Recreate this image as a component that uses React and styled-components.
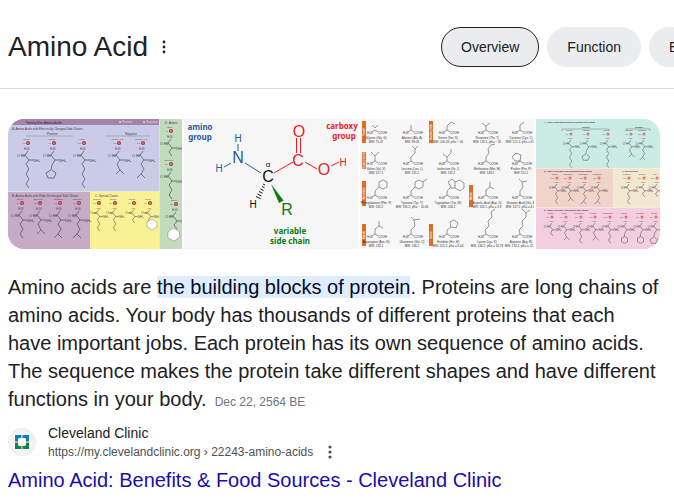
import React from "react";
import styled, { createGlobalStyle } from "styled-components";

const GlobalStyle = createGlobalStyle`
  * { box-sizing: border-box; }
  body {
    margin: 0;
    background: #fff;
    color: #202124;
    font-family: "Liberation Sans", Arial, sans-serif;
    overflow-x: hidden;
  }
`;

const Header = styled.header`
  display: flex;
  align-items: center;
  padding: 27px 0 21px 8px;
  border-bottom: 1px solid #dadce0;
  overflow: hidden;
`;

const TitleBlock = styled.div`
  display: flex;
  align-items: center;
  gap: 8px;
  flex: 0 0 433px;
`;

const Title = styled.h1`
  margin: 0;
  font-size: 28px;
  line-height: 36px;
  font-weight: 400;
`;

const MenuButton = styled.button`
  display: flex;
  align-items: center;
  justify-content: center;
  width: 16px;
  height: 18px;
  padding: 0;
  border: 0;
  background: none;
  color: ${(p) => p.$tone};
  cursor: pointer;
`;

const Chips = styled.nav`
  display: flex;
  gap: 8px;
`;

const Chip = styled.button`
  flex: none;
  height: 40px;
  padding: 0 19px;
  border: 1px solid ${(p) => (p.$active ? "#202124" : "#ebecee")};
  border-radius: 20px;
  background: #ebecee;
  color: #202124;
  font: 14px/20px "Liberation Sans", Arial, sans-serif;
  cursor: pointer;
`;

const Main = styled.main`
  padding: 30px 14px 8px 8px;
`;

const Gallery = styled.div`
  display: grid;
  grid-template-columns: 174fr 174fr 174fr 124fr;
  gap: 2px;
  border-radius: 16px;
  overflow: hidden;
`;

const Thumb = styled.svg`
  display: block;
  width: 100%;
  height: 130px;
  background: ${(p) => p.$bg};
  font-family: "Liberation Sans", Arial, sans-serif;
`;

const Answer = styled.p`
  margin: 24px 0 10px;
  font-size: 20px;
  line-height: 28px;
`;

const Highlight = styled.mark`
  background: #e0edff;
  color: #040c28;
`;

const DateNote = styled.span`
  margin-left: 8px;
  font-size: 12px;
  line-height: 1;
  color: #70757a;
`;

const Source = styled.div`
  display: flex;
  align-items: center;
  gap: 12px;
`;

const Favicon = styled.span`
  display: flex;
  align-items: center;
  justify-content: center;
  width: 28px;
  height: 28px;
  border: 1px solid #ecedef;
  border-radius: 50%;
  background: #f1f3f4;
`;

const SiteName = styled.div`
  font-size: 14px;
  line-height: 20px;
`;

const UrlRow = styled.div`
  display: flex;
  align-items: center;
  gap: 9px;
  font-size: 12px;
  line-height: 18px;
  color: #4d5156;
`;

const ResultTitle = styled.h3`
  margin: 6px 0 0;
  font-size: 20px;
  line-height: 26px;
  font-weight: 400;
`;

const ResultLink = styled.a`
  color: #1a0dab;
  text-decoration: none;
  &:hover { text-decoration: underline; }
`;

function Dots({ r, step }) {
  return (
    <svg width="6" height="16" viewBox="0 0 6 16" fill="currentColor" aria-hidden="true">
      <circle cx="3" cy={8 - step} r={r} />
      <circle cx="3" cy="8" r={r} />
      <circle cx="3" cy={8 + step} r={r} />
    </svg>
  );
}

/* Side chains, drawn from the alpha carbon of each residue. */
const TAILS = {
  short: "l-3 4l3 4",
  fork: "l-3 4l3 6l4 4m-4 -4l-4 4",
  mid: "l-3 4l3 5l-3 5l3 4",
  long: "l-3 4l3 5l-3 5l3 5l-3 5l3 4",
  amide: "l-3 4l3 5l-3 5l4 4m-4 -4l-4 4",
  ring5: "l-3 5l-1 5l-5 3l2 5l6 0l2 -5l-4 -3",
  ring6: "l-3 5l0 4l-4 2l0 5l4 2l4 -2l0 -5l-4 -2",
};

function Residue({ x, y, tail, name, dot = "#b3303c", k = 1, r = 2 }) {
  return (
    <g transform={`translate(${x} ${y})`}>
      <text x="-2" y="-3" fontSize="2" textAnchor="middle" fill="#444">{name}</text>
      <text x="-6" y="1" fontSize="2" fill="#555">{name.slice(0, 3)}</text>
      <circle r={r} fill={dot} />
      <circle r={r / 3} fill="#fff" opacity="0.8" />
      <g transform={`scale(${k})`} fill="#4c4c58">
        <text x="-4" y="7" fontSize="3">H₂N</text>
        <text x="-11" y="14" fontSize="4">O</text>
        <text x="5" y="19" fontSize="4">NH₂</text>
        <path
          d={`M0 8L-3 12M-7 12H-3M-7 13H-3M-3 12L1 17H5M1 17${TAILS[tail]}`}
          fill="none" stroke="#4c4c58" strokeWidth="0.7"
        />
      </g>
    </g>
  );
}

const CHART_A = [
  [20, 24, "long", "Arginine"], [46, 24, "ring5", "Histidine"], [76, 24, "long", "Lysine"],
  [111, 24, "fork", "Aspartic Acid"], [135, 24, "amide", "Glutamic Acid"],
  [14, 84, "mid", "Serine"], [32, 84, "fork", "Threonine"],
  [52, 84, "amide", "Asparagine"], [71, 84, "amide", "Glutamine"],
  [91, 84, "mid", "Cysteine"], [107, 84, "mid", "Seleno"],
  [126, 84, "short", "Glycine"], [142, 84, "short", "Proline"],
  [163, 12, "short", "Alanine"], [163, 45, "mid", "Isoleucine"], [168, 85, "short", "Phenyl"],
];

function ChartA() {
  return (
    <Thumb viewBox="0 0 174 130" preserveAspectRatio="xMidYMid slice" $bg="#cacbe6" role="img" aria-label="Twenty-one amino acids chart">
      <rect width="151" height="6" fill="#a184a8" />
      <rect y="73" width="82" height="57" fill="#c5abc6" />
      <rect x="82" y="72" width="70" height="58" fill="#f8f294" />
      <rect x="152" width="22" height="130" fill="#c1dcbd" />
      <path d="M0 72.5H151M151.5 0V130" stroke="#e3e1e4" strokeWidth="0.8" />
      <path d="M18 17H66M98 17H142" stroke="#777" strokeWidth="0.4" />
      <g fontSize="4" fill="#473a55">
        <text x="18" y="5" fontSize="3" fontWeight="700">Twenty-One Amino Acids</text>
        <text x="4" y="11" fontSize="3">A. Amino Acids with Electrically Charged Side Chains</text>
        <text x="39" y="16" fontSize="3">Positive</text>
        <text x="117" y="16" fontSize="3">Negative</text>
        <text x="4" y="78" fontSize="3">B. Amino Acids with Polar Uncharged Side Chains</text>
        <text x="87" y="78" fontSize="3">C. Special Cases</text>
        <text x="157" y="5" fontSize="3">D. Amino</text>
      </g>
      <g fill="#e4d7e6">
        <circle cx="112" cy="3" r="1" /><circle cx="136" cy="3" r="1" />
        <text x="114" y="4" fontSize="3">Positive</text>
        <text x="138" y="4" fontSize="3">Negative</text>
      </g>
      {CHART_A.map(([x, y, tail, name]) => (
        <Residue key={name} x={x} y={y} tail={tail} name={name} k={x > 80 && y === 84 ? 0.8 : 1} />
      ))}
      <path d="M139 103l5 -3l5 3l0 5l-5 3l-5 -3z" fill="#fff" stroke="#777" strokeWidth="0.5" />
      <path d="M160 113l5 -4l6 3l1 6l-6 4l-6 -3z" fill="#fff" stroke="#777" strokeWidth="0.5" />
    </Thumb>
  );
}

function Structure() {
  return (
    <Thumb viewBox="0 0 174 130" preserveAspectRatio="xMidYMid slice" $bg="#f6f6f6" role="img" aria-label="Structure of an amino acid">
      <g textAnchor="middle" fontSize="16">
        <g fill="#2a5c9c">
          <g fontFamily="Noto Sans, sans-serif" fontSize="8" fontWeight="700">
            <text x="16" y="11">amino</text>
            <text x="16" y="21">group</text>
          </g>
          <text x="54" y="23" fontSize="10">H</text>
          <text x="54" y="44">N</text>
          <text x="35" y="53" fontSize="10">H</text>
          <path d="M54 25V32M40 48L47 44M61 44L77 54" stroke="#2a5c9c" />
        </g>
        <g fill="#ee1c22">
          <g fontFamily="Noto Sans, sans-serif" fontSize="8" fontWeight="700">
            <text x="158" y="10">carboxy</text>
            <text x="160" y="20">group</text>
          </g>
          <text x="115" y="18">O</text>
          <text x="114" y="47">C</text>
          <text x="140" y="56">O</text>
          <text x="159" y="47" fontSize="10">H</text>
          <path d="M112.5 19V34M116.5 19V34M90 54L109 43M121 43L133 50M147 47L155 43" stroke="#ee1c22" />
        </g>
        <g fill="#111">
          <text x="84" y="48" fontSize="8">α</text>
          <text x="84" y="63">C</text>
          <text x="69" y="89" fontSize="10">H</text>
          <path d="M79 65l2 1M78 67.5l2.5 1.2M76.5 70l3 1.5M75 72.5l3.5 1.7M73.5 75l4 2M72 77.5l4.5 2.2" stroke="#111" />
        </g>
        <g fill="#0b7a14">
          <text x="103" y="96">R</text>
          <path d="M87 65L95 84L99.5 81.5Z" />
          <g fontFamily="Noto Sans, sans-serif" fontSize="8" fontWeight="700">
            <text x="106" y="115">variable</text>
            <text x="106" y="125">side chain</text>
          </g>
        </g>
      </g>
    </Thumb>
  );
}

const CARD_X = [15, 51, 87, 126, 160];
const CARD_ROWS = [
  { y: 14, cards: [
    ["Glycine (Gly, G)", "MW: 75.07", "m-3 -5l3 3l3 -3"],
    ["Alanine (Ala, A)", "MW: 89.09", "v-5"],
    ["Serine (Ser, S)", "MW: 105.09, pKa ~ 16", "v-4l4 -4l4 2"],
    ["Threonine (Thr, T)", "MW: 119.1, pKa ~ 16", "v-4l-4 -3m4 3l4 -3"],
    ["Cysteine (Cys, C)", "MW: 121.2, pKa = 8.18", "v-5l4 -3"],
  ] },
  { y: 45, cards: [
    ["Valine (Val, V)", "MW: 117.1", "v-5l-4 -4m4 4l4 -4"],
    ["Leucine (Leu, L)", "MW: 131.2", "v-4l4 -4v-4l-3 -3m3 3l3 -3"],
    ["Isoleucine (Ile, I)", "MW: 131.2", "v-4l-4 -3m4 3l4 -4v-4"],
    ["Methionine (Met, M)", "MW: 149.2", "v-4l3 -4l-1 -4l3 -4l4 -1"],
    ["Proline (Pro, P)", "MW: 115.1", "l-5 0l-3 -4l4 -4l5 2z"],
  ] },
  { y: 79, cards: [
    ["Phenylalanine (Phe, F)", "MW: 165.2", "v-4l4 -4l0 -5l4 -2l4 2v5l-4 2l-4 -2"],
    ["Tyrosine (Tyr, Y)", "MW: 181.2, pKa ~ 10.46", "v-4l4 -4v-5l4 -2l4 2v5l-4 2l-4 -2m8 -5l4 -3"],
    ["Tryptophan (Trp, W)", "MW: 204.2", "v-4l4 -4l-3 -5l4 -3l3 3v6h-4m4 -6l5 -2l4 3v5l-4 3l-5 -3"],
    ["Aspartic Acid (Asp, D)", "MW: 133.1, pKa = 3.9", "v-5l4 -3l4 2m-4 -2v-5"],
    ["Glutamic Acid (Glu, E)", "MW: 147.1, pKa = 4.07", "v-4l3 -4l-1 -5l-3 -3m3 3l5 -1"],
  ] },
  { y: 118, cards: [
    ["Asparagine (Asn, N)", "MW: 132.1", "v-5l4 -3l4 2m-4 -2v-5"],
    ["Glutamine (Gln, Q)", "MW: 146.1", "v-4l4 -4l-1 -6l-3 -3m3 3l6 -1"],
    ["Histidine (His, H)", "MW: 155.2, pKa = 6.04", "v-4l4 -3l-1 -5l4 -2l4 3l-2 5l-5 -1"],
    ["Lysine (Lys, K)", "MW: 146.2, pKa = 10.79", "l-1 -4l4 -4l-1 -5l4 -4l-1 -5l4 -3"],
    ["Arginine (Arg, R)", "MW: 174.2, pKa = 12.48", "l-1 -4l4 -4l-1 -5l4 -4v-4l-4 -4m4 4l4 -3"],
  ] },
];

const TABS = [[2, 2, 22, "Small"], [2, 33, 17, "Hydrophobic"], [2, 62, 25, "Aromatic"], [2, 105, 22, "Amide"],
  [69, 2, 22, "Nucleophilic"], [69, 105, 22, "Basic"], [109, 66, 22, "Acidic"]];

function Cards() {
  return (
    <Thumb viewBox="0 0 174 130" preserveAspectRatio="xMidYMid slice" $bg="#f7f7f7" role="img" aria-label="Amino acids by group">
      {TABS.map(([x, y, h, name]) => (
        <g key={name}>
          <rect x={x} y={y} width="4" height={h} fill="#e06c21" />
          <text transform={`translate(${x + 3} ${y + h / 2}) rotate(-90)`} fontSize="3" textAnchor="middle" fill="#fff">{name}</text>
        </g>
      ))}
      {CARD_ROWS.map((row) => row.cards.map(([name, mass, chain], i) => (
        <g key={name} transform={`translate(${CARD_X[i]} ${row.y})`} fill="#333">
          <text x="-8" y="1" fontSize="3">H₂N</text>
          <text x="3" y="1" fontSize="3">COOH</text>
          <path d={`M-3 -1L0 -3L3 -1M0 -3${chain}`} fill="none" stroke="#555" strokeWidth="0.6" />
          <text x="1" y="6" fontSize="3" textAnchor="middle">{name}</text>
          <text x="1" y="10" fontSize="3" textAnchor="middle">{mass}</text>
        </g>
      )))}
    </Thumb>
  );
}

const CHART_B = [
  [35, 15, "long", "Arginine"], [52, 15, "ring5", "Histidine"], [72, 15, "long", "Lysine"],
  [95, 15, "fork", "Aspartic"], [108, 15, "amide", "Glutamic"],
  [21, 59, "mid", "Serine"], [34, 59, "fork", "Threonine"], [49, 59, "amide", "Asparagine"], [63, 59, "amide", "Glutamine"],
  [93, 59, "mid", "Cysteine"], [108, 59, "short", "Glycine"], [121, 59, "short", "Pro"],
  [16, 98, "short", "Alanine"], [30, 98, "fork", "Valine"], [45, 98, "mid", "Isoleucine"], [59, 98, "fork", "Leucine"],
  [74, 98, "mid", "Methionine"], [90, 98, "ring6", "Phenyl"], [106, 98, "ring6", "Tyrosine"], [120, 98, "ring5", "Trypto"],
];

function ChartB() {
  return (
    <Thumb viewBox="0 0 124 130" preserveAspectRatio="xMidYMid slice" $bg="#cbece4" role="img" aria-label="Amino acid side chains">
      <rect y="49" width="78" height="40" fill="#f0d4cb" />
      <rect x="78" y="49" width="46" height="40" fill="#f2e8cf" />
      <rect y="89" width="124" height="41" fill="#f3cede" />
      <path d="M0 49.5H124M0 88.500H124M77.5 49V89" stroke="#f4ebe5" strokeWidth="0.8" />
      <path d="M26 12V10H73V12M90 12V10H114V12" fill="none" stroke="#777" strokeWidth="0.5" />
      <g fontSize="2" fontWeight="700" fill="#333">
        <text x="8" y="4">A.  Amino Acids with Electrically Charged Side Chains</text>
        <text x="46" y="9">Positive</text>
        <text x="99" y="9">Negative</text>
        <text x="8" y="53">B.  Amino Acids with Polar Uncharged Side Chains</text>
        <text x="86" y="53">C.  Special Cases</text>
        <text x="8" y="92">D.  Amino Acids with Hydrophobic Side Chains</text>
      </g>
      {CHART_B.map(([x, y, tail, name]) => (
        <Residue key={name} x={x} y={y} tail={tail} name={name} dot="#f0604d" k={0.75} r={1.5} />
      ))}
    </Thumb>
  );
}

function ClinicMark() {
  return (
    <svg width="16" height="16" viewBox="0 0 16 16" aria-hidden="true">
      <rect width="16" height="16" fill="#fff" />
      <path d="M1 1H7.5V4H5L4 5V7.5H1Z M8.5 1H15V7.5H12V5L11 4H8.5Z" fill="#0a7cc4" />
      <path d="M1 8.5H4V11L5 12H7.5V15H1Z M12 8.5H15V15H8.5V12H11L12 11Z" fill="#138440" />
    </svg>
  );
}

export default function App() {
  return (
    <>
      <GlobalStyle />
      <Header>
        <TitleBlock>
          <Title>Amino Acid</Title>
          <MenuButton $tone="#202124" aria-label="More options"><Dots r={1.4} step={5} /></MenuButton>
        </TitleBlock>
        <Chips aria-label="Topics">
          <Chip $active>Overview</Chip>
          <Chip>Function</Chip>
          <Chip>Examples</Chip>
        </Chips>
      </Header>
      <Main>
        <Gallery>
          <ChartA />
          <Structure />
          <Cards />
          <ChartB />
        </Gallery>
        <Answer>
          Amino acids are <Highlight>the building blocks of protein</Highlight>. Proteins are long chains of amino
          acids. Your body has thousands of different proteins that each have important jobs. Each protein has its
          own sequence of amino acids. The sequence makes the protein take different shapes and have different
          functions in your body.<DateNote>Dec 22, 2564 BE</DateNote>
        </Answer>
        <Source>
          <Favicon><ClinicMark /></Favicon>
          <div>
            <SiteName>Cleveland Clinic</SiteName>
            <UrlRow>
              <span>https://my.clevelandclinic.org › 22243-amino-acids</span>
              <MenuButton $tone="#4d5156" aria-label="About this result"><Dots r={1.6} step={5} /></MenuButton>
            </UrlRow>
          </div>
        </Source>
        <ResultTitle>
          <ResultLink href="https://my.clevelandclinic.org">Amino Acid: Benefits &amp; Food Sources - Cleveland Clinic</ResultLink>
        </ResultTitle>
      </Main>
    </>
  );
}
